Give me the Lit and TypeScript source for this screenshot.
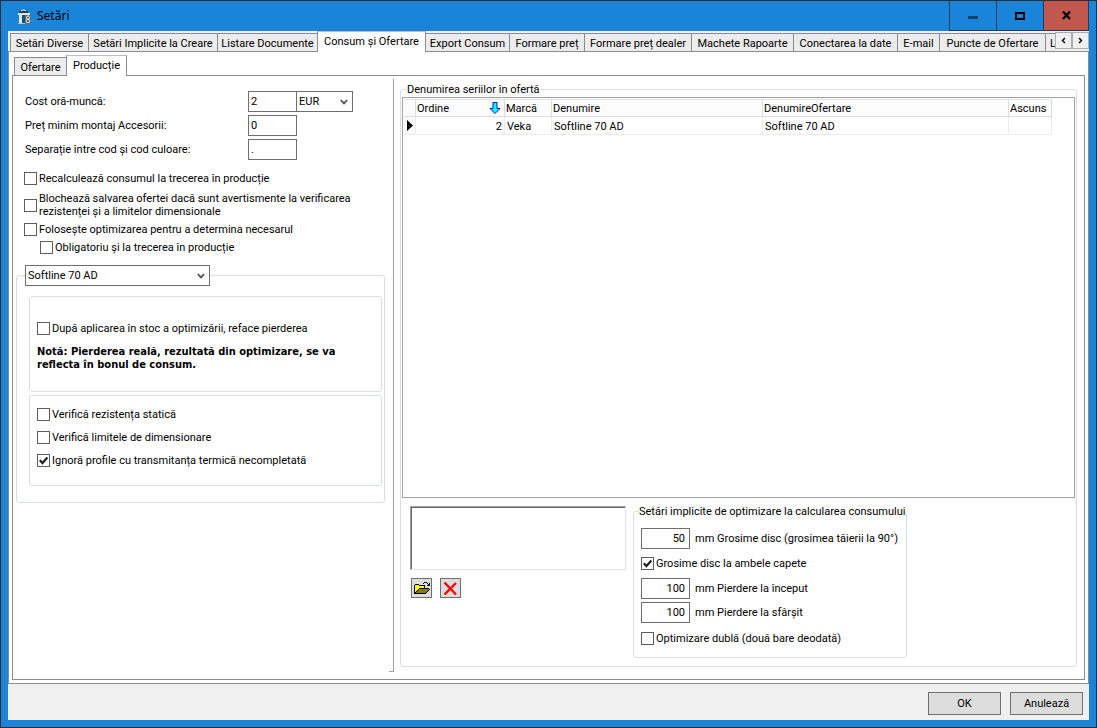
import { LitElement, html, css } from "lit";
import { customElement, property, state } from "lit/decorators.js";
import { classMap } from "lit/directives/class-map.js";

const MAIN_TABS = [
  "Setări Diverse",
  "Setări Implicite la Creare",
  "Listare Documente",
  "Consum și Ofertare",
  "Export Consum",
  "Formare preț",
  "Formare preț dealer",
  "Machete Rapoarte",
  "Conectarea la date",
  "E-mail",
  "Puncte de Ofertare",
  "Li",
];

const controls = css`
  * {
    box-sizing: border-box;
  }
  button,
  input,
  select {
    font: inherit;
    color: inherit;
    margin: 0;
    border-radius: 0;
  }
  input[type="text"] {
    width: 49px;
    height: 21px;
    padding: 0 2px;
    border: 1px solid #6e6e6e;
    background: #fff;
    outline: none;
  }
  input[type="text"].number {
    text-align: right;
    padding: 0 4px;
  }
  select {
    appearance: none;
    height: 21px;
    padding: 0 16px 0 2px;
    border: 1px solid #6e6e6e;
    outline: none;
    background: #fff
      url('data:image/svg+xml,<svg xmlns="http://www.w3.org/2000/svg" width="8" height="6"><path d="M.8 1 4 4.4 7.2 1" fill="none" stroke="%23505050" stroke-width="1.8"/></svg>')
      no-repeat right 4px center;
  }
  fieldset {
    margin: 0;
    min-width: 0;
    border: 1px solid #d5dfe5;
    border-radius: 3px;
  }
  legend {
    padding: 0;
    line-height: 13px;
  }
`;

@customElement("check-box")
export class CheckBox extends LitElement {
  @property() label = "";
  @property({ type: Boolean }) checked = false;

  static styles = css`
    :host {
      display: block;
    }
    .row {
      display: flex;
      align-items: center;
      gap: 2px;
      line-height: 13px;
    }
    .box {
      appearance: none;
      flex: none;
      box-sizing: border-box;
      width: 13px;
      height: 13px;
      margin: 0;
      border: 1px solid #5e5e5e;
      background: #fff;
    }
    .box:checked {
      background: #fff
        url('data:image/svg+xml,<svg xmlns="http://www.w3.org/2000/svg" width="11" height="11"><path d="M1.8 5.2 4.4 8 9.4 2.4" fill="none" stroke="%23222" stroke-width="2.2"/></svg>')
        no-repeat center;
    }
  `;

  render() {
    return html`<label class="row">
      <input class="box" type="checkbox" .checked=${this.checked} />
      <span>${this.label}</span>
    </label>`;
  }
}

@customElement("production-settings")
export class ProductionSettings extends LitElement {
  static styles = [
    controls,
    css`
      :host {
        display: block;
        padding: 12px 8px 0 3px;
      }
      .fields {
        display: grid;
        grid-template-columns: 223px auto;
        row-gap: 3px;
        align-items: center;
        padding-left: 9px;
        margin: 0;
      }
      .pair {
        display: flex;
      }
      .currency {
        width: 57px;
        margin-left: -1px;
      }
      .checks {
        display: flex;
        flex-direction: column;
        padding: 12px 20px 0 8px;
      }
      .checks .wide {
        margin: 7px 0 5px;
      }
      .checks .nested {
        margin: 5px 0 0 16px;
      }
      .series {
        margin-top: 11px;
        padding: 10px 2px 16px 12px;
      }
      .series > legend {
        margin-left: -4px;
      }
      .series-select {
        width: 185px;
      }
      .box {
        border: 1px solid #d5dfe5;
        border-radius: 3px;
        padding: 0 7px;
      }
      .loss {
        padding-top: 25px;
        padding-bottom: 20px;
        margin-bottom: 3px;
      }
      .note {
        margin: 10px 0 0;
        font: bold 11px/13px "DejaVu Sans Condensed", sans-serif;
      }
      .verify {
        display: flex;
        flex-direction: column;
        gap: 10px;
        padding-top: 12px;
        padding-bottom: 18px;
      }
    `,
  ];

  render() {
    return html`
      <div class="fields">
        <label for="cost">Cost oră-muncă:</label>
        <div class="pair">
          <input id="cost" type="text" value="2" />
          <select class="currency" aria-label="Monedă">
            <option>EUR</option>
          </select>
        </div>
        <label for="price">Preț minim montaj Accesorii:</label>
        <input id="price" type="text" value="0" />
        <label for="sep">Separație între cod și cod culoare:</label>
        <input id="sep" type="text" value="." />
      </div>
      <div class="checks">
        <check-box label="Recalculează consumul la trecerea în producție"></check-box>
        <check-box
          class="wide"
          label="Blochează salvarea ofertei dacă sunt avertismente la verificarea rezistenței și a limitelor dimensionale"
        ></check-box>
        <check-box label="Folosește optimizarea pentru a determina necesarul"></check-box>
        <check-box class="nested" label="Obligatoriu și la trecerea în producție"></check-box>
      </div>
      <fieldset class="series">
        <legend>
          <select class="series-select" aria-label="Serie">
            <option>Softline 70 AD</option>
          </select>
        </legend>
        <div class="box loss">
          <check-box label="După aplicarea în stoc a optimizării, reface pierderea"></check-box>
          <p class="note">
            Notă: Pierderea reală, rezultată din optimizare, se va reflecta în bonul de consum.
          </p>
        </div>
        <div class="box verify">
          <check-box label="Verifică rezistența statică"></check-box>
          <check-box label="Verifică limitele de dimensionare"></check-box>
          <check-box checked label="Ignoră profile cu transmitanța termică necompletată"></check-box>
        </div>
      </fieldset>
    `;
  }
}

@customElement("series-panel")
export class SeriesPanel extends LitElement {
  private rows = [
    { order: 2, brand: "Veka", name: "Softline 70 AD", offer: "Softline 70 AD", hidden: "" },
  ];

  static styles = [
    controls,
    css`
      :host {
        display: flex;
      }
      .group {
        flex: 1;
        display: flex;
        flex-direction: column;
        padding: 0 1px 8px 1px;
      }
      .group > legend {
        margin-left: 5px;
      }
      .body {
        height: 100%;
        display: flex;
        flex-direction: column;
      }
      .sheet {
        flex: 1;
        margin-top: 1px;
        padding: 1px;
        border: 1px solid #a0a0a5;
      }
      table {
        table-layout: fixed;
        border-collapse: separate;
        border-spacing: 0;
        width: 648px;
      }
      th,
      td {
        height: 18px;
        padding: 1px 2px 0;
        line-height: 13px;
        font-weight: normal;
        text-align: left;
        border-right: 1px solid #ececec;
        border-bottom: 1px solid #ececec;
      }
      th {
        padding: 0 1px;
        background: #fcfcfc;
        border-color: #dcdcdc;
        border-top: 1px solid #e4e4e4;
      }
      td:first-child {
        padding: 0;
        background: #fafafa;
      }
      td.order {
        text-align: right;
      }
      .mark {
        width: 12px;
      }
      .c-order {
        width: 89px;
      }
      .c-brand {
        width: 47px;
      }
      .c-name {
        width: 211px;
      }
      .c-offer {
        width: 246px;
      }
      .sorted {
        display: flex;
        justify-content: space-between;
        align-items: center;
        padding-right: 2px;
      }
      svg {
        display: block;
      }
      .bottom {
        display: flex;
        align-items: flex-start;
        gap: 7px;
        padding: 8px 0 0 8px;
      }
      .list {
        width: 216px;
        height: 64px;
        border: 1px solid;
        border-color: #a0a0a0 #e3e3e3 #e3e3e3 #a0a0a0;
        box-shadow: inset 1px 1px #696969;
        background: #fff;
      }
      .tools {
        display: flex;
        gap: 8px;
        padding: 8px 0 0 1px;
      }
      .tool {
        display: grid;
        place-items: center;
        width: 21px;
        height: 20px;
        padding: 0;
        border: 1px solid #707070;
        background: #ddd;
      }
      .optim {
        width: 274px;
        margin-top: -1px;
        padding: 10px 7px 12px;
      }
      .optim > legend {
        margin-left: -2px;
        white-space: nowrap;
      }
      .line {
        display: flex;
        align-items: center;
        gap: 5px;
        margin-bottom: 3px;
      }
      .gap {
        margin: 8px 0;
      }
      .last {
        margin-top: 9px;
      }
    `,
  ];

  render() {
    return html`
      <fieldset class="group">
        <legend>Denumirea seriilor în ofertă</legend>
        <div class="body">
          <div class="sheet">
            <table>
              <thead>
                <tr>
                  <th class="mark"></th>
                  <th class="c-order">
                    <div class="sorted">
                      <span>Ordine</span>
                      <svg width="12" height="14" viewBox="0 0 12 14">
                        <path
                          d="M4 1.500h4v6h3L6 12.500 1 7.500h3z"
                          fill="#0ff"
                          stroke="#1010c8"
                        />
                      </svg>
                    </div>
                  </th>
                  <th class="c-brand">Marcă</th>
                  <th class="c-name">Denumire</th>
                  <th class="c-offer">DenumireOfertare</th>
                  <th>Ascuns</th>
                </tr>
              </thead>
              <tbody>
                ${this.rows.map(
                  (r) => html`<tr>
                    <td>
                      <svg width="11" height="12" viewBox="0 0 11 12">
                        <path d="M3 0v11l6-5.500z" fill="#000" />
                      </svg>
                    </td>
                    <td class="order">${r.order}</td>
                    <td>${r.brand}</td>
                    <td>${r.name}</td>
                    <td>${r.offer}</td>
                    <td>${r.hidden}</td>
                  </tr>`
                )}
              </tbody>
            </table>
          </div>
          <div class="bottom">
            <div>
              <div class="list" role="listbox" tabindex="0" aria-label="Fișiere"></div>
              <div class="tools">
                <button class="tool" aria-label="Deschide">
                  <svg width="16" height="13" viewBox="0 0 16 13" shape-rendering="crispEdges">
                    <path d="M0 3h1v-1h4v1h6v3h4v1h1v1h-1v1h-1v1h-1v1h-1v1h-12z" fill="#000" />
                    <path d="M1 3h4v1h5v2h-5v1h-1v1h-1v1h-1v1h-1z" fill="#ff0" />
                    <path d="M5 7h10v1h-1v1h-1v1h-1v1H2v-1h1v-1h1v-1h1z" fill="#808000" />
                    <path d="M9 1h1V0h3v1h1v1h1v-1h1v3h-3v-1h1v-1h-1v-1h-3v1h-1z" fill="#000" />
                  </svg>
                </button>
                <button class="tool" aria-label="Șterge">
                  <svg width="15" height="15" viewBox="0 0 15 15">
                    <path d="M1.500 1.500 13 13.500M13 2 1.500 13.500" stroke="#f00" stroke-width="2.400" />
                  </svg>
                </button>
              </div>
            </div>
            <fieldset class="optim">
              <legend>Setări implicite de optimizare la calcularea consumului</legend>
              <div class="line">
                <input id="disc" class="number" type="text" value="50" />
                <label for="disc">mm Grosime disc (grosimea tăierii la 90°)</label>
              </div>
              <check-box class="gap" checked label="Grosime disc la ambele capete"></check-box>
              <div class="line">
                <input id="start" class="number" type="text" value="100" />
                <label for="start">mm Pierdere la început</label>
              </div>
              <div class="line">
                <input id="end" class="number" type="text" value="100" />
                <label for="end">mm Pierdere la sfârșit</label>
              </div>
              <check-box class="last" label="Optimizare dublă (două bare deodată)"></check-box>
            </fieldset>
          </div>
        </div>
      </fieldset>
    `;
  }
}

@customElement("app-root")
export class AppRoot extends LitElement {
  @state() private tab = 3;

  static styles = [
    controls,
    css`
      :host {
        display: block;
        font: 11px/13px Roboto, "Liberation Sans", sans-serif;
        color: #000;
      }
      .window {
        display: flex;
        flex-direction: column;
        min-height: 100vh;
        padding: 0 7px 7px;
        border: 1px solid #2b2d31;
        background: #1a84d9;
      }
      .title {
        display: flex;
        align-items: center;
        height: 30px;
        padding-left: 9px;
      }
      .title h1 {
        flex: 1;
        margin: 0 0 0 4px;
        font: 12px/16px "Noto Sans", sans-serif;
      }
      .caption {
        align-self: stretch;
        display: grid;
        place-items: center;
        width: 47px;
        padding: 0;
        border: 1px solid #1c3d5c;
        border-width: 0 0 1px 1px;
        background: transparent;
      }
      .caption.close {
        width: 46px;
        background: #c1584f;
        border-right-width: 1px;
      }
      .client {
        flex: 1;
        display: flex;
        flex-direction: column;
        background: #f0f0f0;
      }
      .strip {
        display: flex;
        position: relative;
        z-index: 1;
        height: 21px;
        margin-bottom: -1px;
      }
      .tabs {
        flex: 1;
        min-width: 0;
        overflow: hidden;
        display: grid;
        grid-template-columns: 79px 129px 100px 108px 84px 75px 107px 102px 104px 42px 106px 60px;
        align-items: end;
        padding-left: 2px;
      }
      .tab {
        height: 19px;
        padding: 1px 0 0;
        line-height: 13px;
        white-space: nowrap;
        border: 1px solid #898c95;
        border-left-width: 0;
        background: #ececec;
      }
      .tab:first-child {
        border-left-width: 1px;
      }
      .tab:last-child {
        text-align: left;
        padding-left: 4px;
      }
      .tab.active {
        height: 21px;
        padding-bottom: 2px;
        border-top-color: #b8bcc4;
        border-left-width: 1px;
        border-bottom-width: 0;
        margin-left: -1px;
        background: #fff;
      }
      .scroll {
        display: flex;
        height: 18px;
        padding-top: 1px;
      }
      .scroll button {
        display: grid;
        place-items: center;
        width: 17px;
        padding: 0;
        border: 1px solid #adadad;
        background: #f0f0f0;
      }
      .page {
        flex: 1;
        display: flex;
        flex-direction: column;
        padding: 3px;
        border: 1px solid #898c95;
        background: #fff;
      }
      .sub {
        grid-template-columns: 53px 60px;
        height: 21px;
        margin-bottom: -1px;
        position: relative;
        z-index: 1;
        flex: none;
      }
      .sub .tab:last-child {
        text-align: center;
        padding-left: 0;
        width: 61px;
      }
      .sheet {
        flex: 1;
        display: grid;
        grid-template-columns: 381px 1fr;
        padding: 3px 7px 7px 0;
        border: 1px solid #898c95;
      }
      .left {
        border-right: 1px solid #a0a0a0;
        background: linear-gradient(#a0a0a0, #a0a0a0) no-repeat right bottom / 4px 1px;
      }
      .right {
        padding: 4px 0 5px 6px;
      }
      .footer {
        display: flex;
        justify-content: flex-end;
        gap: 9px;
        padding: 8px 6px 5px;
      }
      .footer button {
        width: 73px;
        height: 23px;
        padding: 0;
        border: 1px solid #707070;
        background: #ddd;
      }
    `,
  ];

  private pick(i: number) {
    this.tab = i;
  }

  render() {
    return html`
      <main class="window">
        <header class="title">
          <svg width="16" height="16" viewBox="0 0 16 16">
            <path d="M2 5.500C2 2.500 4 .8 6.500.8S11 2.500 11 5.500z" fill="#17415f" />
            <path d="M4 3c1-1.500 4-1.500 5 0" stroke="#d8f0fb" stroke-width="1.200" fill="none" />
            <path d="M1 5h12v2H1z" fill="#e4e9ec" />
            <path d="M2 7h3v8H2z" fill="#d9eef7" />
            <path d="M5 7h3v8H5z" fill="#164f78" />
            <path d="M1 15h7v1H1z" fill="#b9c3c9" />
            <rect x="8" y="7" width="6" height="9" rx="2" fill="#5b6770" />
            <circle cx="11" cy="9.500" r="1.600" fill="none" stroke="#e6e6e6" />
            <circle cx="11" cy="13" r="1.900" fill="none" stroke="#e6e6e6" />
          </svg>
          <h1>Setări</h1>
          <button class="caption" aria-label="Minimizează">
            <svg width="10" height="12"><path d="M0 6h10v3H0z" fill="#0f4470" /></svg>
          </button>
          <button class="caption" aria-label="Maximizează">
            <svg width="10" height="8"><path d="M1 1h8v6H1z" fill="none" stroke="#000" stroke-width="2" /></svg>
          </button>
          <button class="caption close" aria-label="Închide">
            <svg width="9" height="9"><path d="M1 .5 8 8M8 .5 1 8" stroke="#000" stroke-width="2.200" /></svg>
          </button>
        </header>
        <div class="client">
          <div class="strip">
            <div class="tabs" role="tablist">
              ${MAIN_TABS.map(
                (t, i) => html`<button
                  role="tab"
                  class=${classMap({ tab: true, active: i === this.tab })}
                  aria-selected=${i === this.tab}
                  @click=${() => this.pick(i)}
                >${t}</button>`
              )}
            </div>
            <div class="scroll">
              <button aria-label="Înapoi">
                <svg width="5" height="7"><path d="M4 1 1.500 3.500 4 6" fill="none" stroke="#111" stroke-width="1.500" /></svg>
              </button>
              <button aria-label="Înainte">
                <svg width="5" height="7"><path d="M1 1 3.500 3.500 1 6" fill="none" stroke="#111" stroke-width="1.500" /></svg>
              </button>
            </div>
          </div>
          <section class="page">
            <div class="tabs sub" role="tablist">
              <button role="tab" class="tab" aria-selected="false">Ofertare</button>
              <button role="tab" class="tab active" aria-selected="true">Producție</button>
            </div>
            <div class="sheet">
              <production-settings class="left"></production-settings>
              <series-panel class="right"></series-panel>
            </div>
          </section>
          <footer class="footer">
            <button>OK</button>
            <button>Anulează</button>
          </footer>
        </div>
      </main>
    `;
  }
}
